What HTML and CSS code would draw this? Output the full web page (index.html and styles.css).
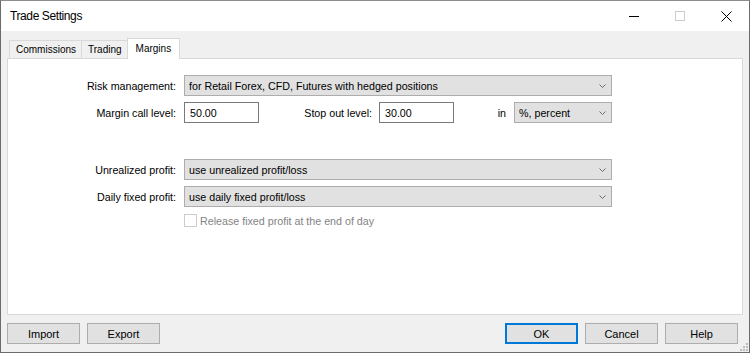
FILE: index.html
```html
<!DOCTYPE html>
<html>
<head>
<meta charset="utf-8">
<title>Trade Settings</title>
<link rel="stylesheet" href="styles.css">
</head>
<body>
<div class="window">
  <div class="titlebar">
    <span class="title">Trade Settings</span>
    <div class="caption">
      <span class="cap-btn"><svg width="10" height="10" viewBox="0 0 10 10"><path d="M0 5.5H10" stroke="#000" stroke-width="1"/></svg></span>
      <span class="cap-btn"><svg width="10" height="10" viewBox="0 0 10 10"><rect x="0.5" y="0.5" width="9" height="9" fill="none" stroke="#cccccc" stroke-width="1"/></svg></span>
      <span class="cap-btn"><svg width="11" height="11" viewBox="0 0 11 11"><path d="M0.5 0.5L10.5 10.5M10.5 0.5L0.5 10.5" stroke="#000" stroke-width="1"/></svg></span>
    </div>
  </div>
  <div class="content">
    <div class="tabs">
      <div class="tab">Commissions</div>
      <div class="tab">Trading</div>
      <div class="tab tab-active">Margins</div>
    </div>
    <div class="panel">
      <div class="form">
        <div class="lbl">Risk management:</div>
        <div class="select select-wide"><span>for Retail Forex, CFD, Futures with hedged positions</span><svg class="chev" width="7" height="4" viewBox="0 0 7 4"><path d="M0.5 0.5L3.5 3.5L6.5 0.5" fill="none" stroke="#6a6a6a" stroke-width="1"/></svg></div>

        <div class="lbl">Margin call level:</div>
        <div class="inline">
          <div class="input">50.00</div>
          <div class="lbl-stop">Stop out level:</div>
          <div class="input">30.00</div>
          <div class="lbl-in">in</div>
          <div class="select select-unit"><span>%, percent</span><svg class="chev" width="7" height="4" viewBox="0 0 7 4"><path d="M0.5 0.5L3.5 3.5L6.5 0.5" fill="none" stroke="#6a6a6a" stroke-width="1"/></svg></div>
        </div>

        <div class="spacer"></div>

        <div class="lbl">Unrealized profit:</div>
        <div class="select select-wide"><span>use unrealized profit/loss</span><svg class="chev" width="7" height="4" viewBox="0 0 7 4"><path d="M0.5 0.5L3.5 3.5L6.5 0.5" fill="none" stroke="#6a6a6a" stroke-width="1"/></svg></div>

        <div class="lbl">Daily fixed profit:</div>
        <div class="select select-wide"><span>use daily fixed profit/loss</span><svg class="chev" width="7" height="4" viewBox="0 0 7 4"><path d="M0.5 0.5L3.5 3.5L6.5 0.5" fill="none" stroke="#6a6a6a" stroke-width="1"/></svg></div>

        <div></div>
        <div class="check-row"><span class="checkbox"></span><span class="check-label">Release fixed profit at the end of day</span></div>
      </div>
    </div>
    <div class="footer">
      <div class="btn-group">
        <div class="btn">Import</div>
        <div class="btn">Export</div>
      </div>
      <div class="btn-group">
        <div class="btn btn-default">OK</div>
        <div class="btn">Cancel</div>
        <div class="btn">Help</div>
      </div>
    </div>
  </div>
  <svg class="grip" width="8" height="8" viewBox="0 0 8 8">
    <rect x="6" y="0" width="2" height="2" fill="#bcbcbc"/>
    <rect x="3" y="3" width="2" height="2" fill="#bcbcbc"/>
    <rect x="6" y="3" width="2" height="2" fill="#bcbcbc"/>
    <rect x="0" y="6" width="2" height="2" fill="#bcbcbc"/>
    <rect x="3" y="6" width="2" height="2" fill="#bcbcbc"/>
    <rect x="6" y="6" width="2" height="2" fill="#bcbcbc"/>
  </svg>
</div>
</body>
</html>
```

FILE: styles.css
```css
html, body {
  margin: 0;
  padding: 0;
  background: #ffffff;
}

.window {
  position: relative;
  width: 750px;
  height: 353px;
  box-sizing: border-box;
  border: 1px solid #6b6b6b;
  border-top-color: #8c8c8c;
  background: #f0f0f0;
  display: flex;
  flex-direction: column;
  font-family: "Liberation Sans", Arial, sans-serif;
  font-size: 10.7px;
  color: #000;
}

.titlebar {
  height: 30px;
  background: #ffffff;
  display: flex;
  align-items: center;
}

.title {
  flex: 1;
  padding-left: 9px;
  font-size: 12px;
  letter-spacing: -0.4px;
  color: #000;
}

.caption {
  display: flex;
  align-self: stretch;
}

.cap-btn {
  width: 46px;
  display: flex;
  align-items: center;
  justify-content: center;
}

.content {
  flex: 1;
  display: flex;
  flex-direction: column;
  padding: 7px 6px 8px 6px;
}

.tabs {
  position: relative;
  z-index: 1;
  display: flex;
  align-items: flex-end;
  height: 21px;
  margin-bottom: -1px;
  padding-left: 2px;
}

.tab {
  height: 19px;
  box-sizing: border-box;
  display: flex;
  align-items: center;
  padding: 0 5px 0 6px;
  border: 1px solid #d9d9d9;
  background: #f0f0f0;
  font-size: 10px;
  margin-left: -1px;
}

.tab:first-child {
  margin-left: 0;
}

.tab-active {
  height: 21px;
  background: #ffffff;
  border-bottom: none;
  padding: 0 8px 1px 8px;
}

.panel {
  flex: 1;
  background: #ffffff;
  border: 1px solid #d9d9d9;
  padding-top: 16px;
}

.form {
  display: grid;
  grid-template-columns: 168px auto;
  justify-content: start;
  column-gap: 8px;
  row-gap: 6px;
}

.lbl {
  height: 21px;
  display: flex;
  align-items: center;
  justify-content: flex-end;
  white-space: nowrap;
}

.select {
  height: 21px;
  box-sizing: border-box;
  display: flex;
  align-items: center;
  justify-content: space-between;
  padding: 0 5px 0 4px;
  background: #e1e1e1;
  border: 1px solid #adadad;
  white-space: nowrap;
}

.select-wide {
  width: 428px;
}

.select-unit {
  width: 98px;
}

.chev {
  flex: none;
}

.inline {
  display: flex;
  align-items: center;
  height: 21px;
}

.input {
  width: 75px;
  height: 21px;
  box-sizing: border-box;
  display: flex;
  align-items: center;
  padding-left: 5px;
  background: #ffffff;
  border: 1px solid #7a7a7a;
}

.lbl-stop {
  width: 120px;
  box-sizing: border-box;
  padding-right: 7px;
  text-align: right;
  white-space: nowrap;
}

.lbl-in {
  width: 60px;
  box-sizing: border-box;
  padding-right: 8px;
  text-align: right;
}

.spacer {
  grid-column: 1 / span 2;
  height: 24px;
}

.check-row {
  display: flex;
  align-items: center;
  height: 15px;
}

.checkbox {
  width: 13px;
  height: 13px;
  box-sizing: border-box;
  border: 1px solid #cccccc;
  background: #ffffff;
  margin-right: 3px;
}

.check-label {
  color: #838383;
  white-space: nowrap;
}

.footer {
  display: flex;
  justify-content: space-between;
  margin-top: 8px;
  padding-right: 5px;
}

.btn-group {
  display: flex;
  gap: 7px;
}

.btn {
  width: 73px;
  height: 21px;
  box-sizing: border-box;
  display: flex;
  align-items: center;
  justify-content: center;
  background: #e1e1e1;
  border: 1px solid #adadad;
  font-size: 11px;
}

.btn-default {
  border: 2px solid #0078d7;
}

.grip {
  position: absolute;
  right: 1px;
  bottom: 1px;
}
```
